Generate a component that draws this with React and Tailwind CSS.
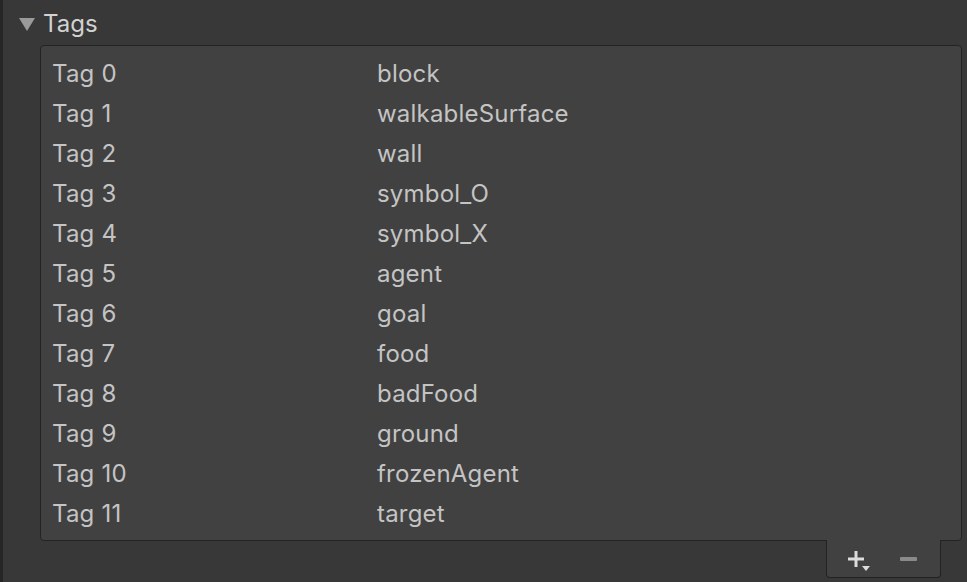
const tags = [
  "block",
  "walkableSurface",
  "wall",
  "symbol_O",
  "symbol_X",
  "agent",
  "goal",
  "food",
  "badFood",
  "ground",
  "frozenAgent",
  "target",
];

export default function App() {
  return (
    <div
      className="w-[967px] h-[582px] bg-[#383838] flex overflow-hidden text-[#c4c4c4]"
      style={{ fontFamily: "Inter, 'Noto Sans', sans-serif" }}
    >
      {/* LEFT EDGE */}
      <div className="w-[3px] bg-[#262626]" />

      <div className="flex-1 flex flex-col">
        {/* HEADER */}
        <div className="h-[45px] flex items-start pt-[8px] pl-[16px] gap-[8px]">
          <svg width="16" height="14" viewBox="0 0 16 14" className="mt-[10px]">
            <polygon points="0,0 16,0 8,13" fill="#9a9a9a" />
          </svg>
          <span className="text-[24px] leading-[32px] text-[#d2d2d2]">Tags</span>
        </div>

        {/* LIST */}
        <div className="ml-[37px] w-[922px] h-[496px] bg-[#414141] border border-[#232323] rounded-[4px] pt-[8px] flex flex-col">
          {tags.map((name, i) => (
            <div key={i} className="h-[40px] flex items-center text-[24px] tracking-[0.2px]">
              <div className="w-[336px] pl-[11px]">Tag {i}</div>
              <div>{name}</div>
            </div>
          ))}
        </div>

        {/* FOOTER BUTTONS */}
        <div className="ml-[823px] w-[115px] h-[38px] -mt-[1px] bg-[#414141] border border-t-0 border-[#232323] rounded-b-[4px] flex items-center">
          <div className="relative ml-[21px] w-[16px] h-[16px]">
            <svg width="16" height="16" viewBox="0 0 16 16">
              <rect x="6.5" y="0" width="3" height="16" fill="#dcdcdc" />
              <rect x="0" y="6.5" width="16" height="3" fill="#dcdcdc" />
            </svg>
            <svg width="8" height="5" viewBox="0 0 8 5" className="absolute left-[14px] top-[15px]">
              <polygon points="0,0 8,0 4,5" fill="#dcdcdc" />
            </svg>
          </div>
          <svg width="17" height="4" viewBox="0 0 17 4" className="ml-[36px]">
            <rect x="0" y="0" width="17" height="4" rx="1" fill="#8a8a8a" />
          </svg>
        </div>
      </div>
    </div>
  );
}
